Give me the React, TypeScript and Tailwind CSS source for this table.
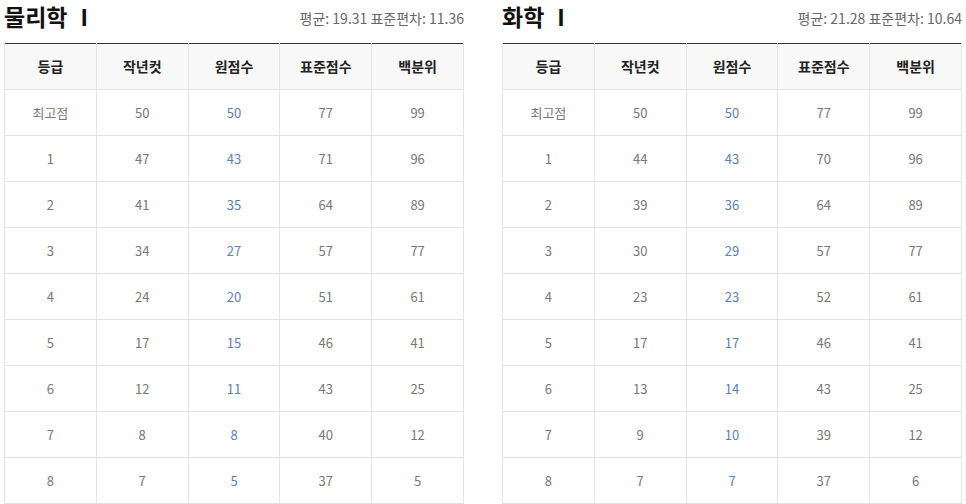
const FONT = "font-['Noto_Sans_CJK_KR','Noto_Sans',sans-serif]";

type Subject = {
  title: string;
  mean: string;
  sd: string;
  rows: [string, number, number, number, number][];
};

const SUBJECTS: Subject[] = [
  {
    title: "물리학 Ⅰ",
    mean: "19.31",
    sd: "11.36",
    rows: [
      ["최고점", 50, 50, 77, 99],
      ["1", 47, 43, 71, 96],
      ["2", 41, 35, 64, 89],
      ["3", 34, 27, 57, 77],
      ["4", 24, 20, 51, 61],
      ["5", 17, 15, 46, 41],
      ["6", 12, 11, 43, 25],
      ["7", 8, 8, 40, 12],
      ["8", 7, 5, 37, 5],
    ],
  },
  {
    title: "화학 Ⅰ",
    mean: "21.28",
    sd: "10.64",
    rows: [
      ["최고점", 50, 50, 77, 99],
      ["1", 44, 43, 70, 96],
      ["2", 39, 36, 64, 89],
      ["3", 30, 29, 57, 77],
      ["4", 23, 23, 52, 61],
      ["5", 17, 17, 46, 41],
      ["6", 13, 14, 43, 25],
      ["7", 9, 10, 39, 12],
      ["8", 7, 7, 37, 6],
    ],
  },
];

const HEADS = ["등급", "작년컷", "원점수", "표준점수", "백분위"];

function ScoreTable({ s }: { s: Subject }) {
  return (
    <div className="w-[460px]">
      {/* title + stats */}
      <div className="flex h-[43px] items-start justify-between pt-[1px]">
        <h2 className="text-[23px] font-bold leading-[30px] text-[#111]">{s.title}</h2>
        <p className="mt-[7px] text-[14px] leading-[20px] text-[#666]">
          평균: {s.mean} 표준편차: {s.sd}
        </p>
      </div>
      <table className="w-full table-fixed border-collapse border-t border-[#333]">
        <thead>
          <tr className="bg-[#f8f8f8]">
            {HEADS.map((h, i) => (
              <th
                key={h}
                className={`h-[46px] border-b border-r border-[#e3e3e3] p-0 text-center text-[14px] font-bold text-[#222] ${i === 0 ? "border-l" : ""}`}
              >
                {h}
              </th>
            ))}
          </tr>
        </thead>
        <tbody>
          {s.rows.map((r) => (
            <tr key={r[0]}>
              {r.map((v, i) => (
                <td
                  key={i}
                  className={`h-[46px] border-b border-r border-[#e3e3e3] p-0 text-center text-[13px] ${i === 0 ? "border-l" : ""} ${i === 2 ? "text-[#5b7fb8]" : "text-[#777]"}`}
                >
                  {v}
                </td>
              ))}
            </tr>
          ))}
        </tbody>
      </table>
    </div>
  );
}

export default function App() {
  return (
    <div className={`${FONT} flex h-[504px] w-[966px] gap-[38px] overflow-hidden bg-white pl-[4px]`}>
      {SUBJECTS.map((s) => (
        <ScoreTable key={s.title} s={s} />
      ))}
    </div>
  );
}
